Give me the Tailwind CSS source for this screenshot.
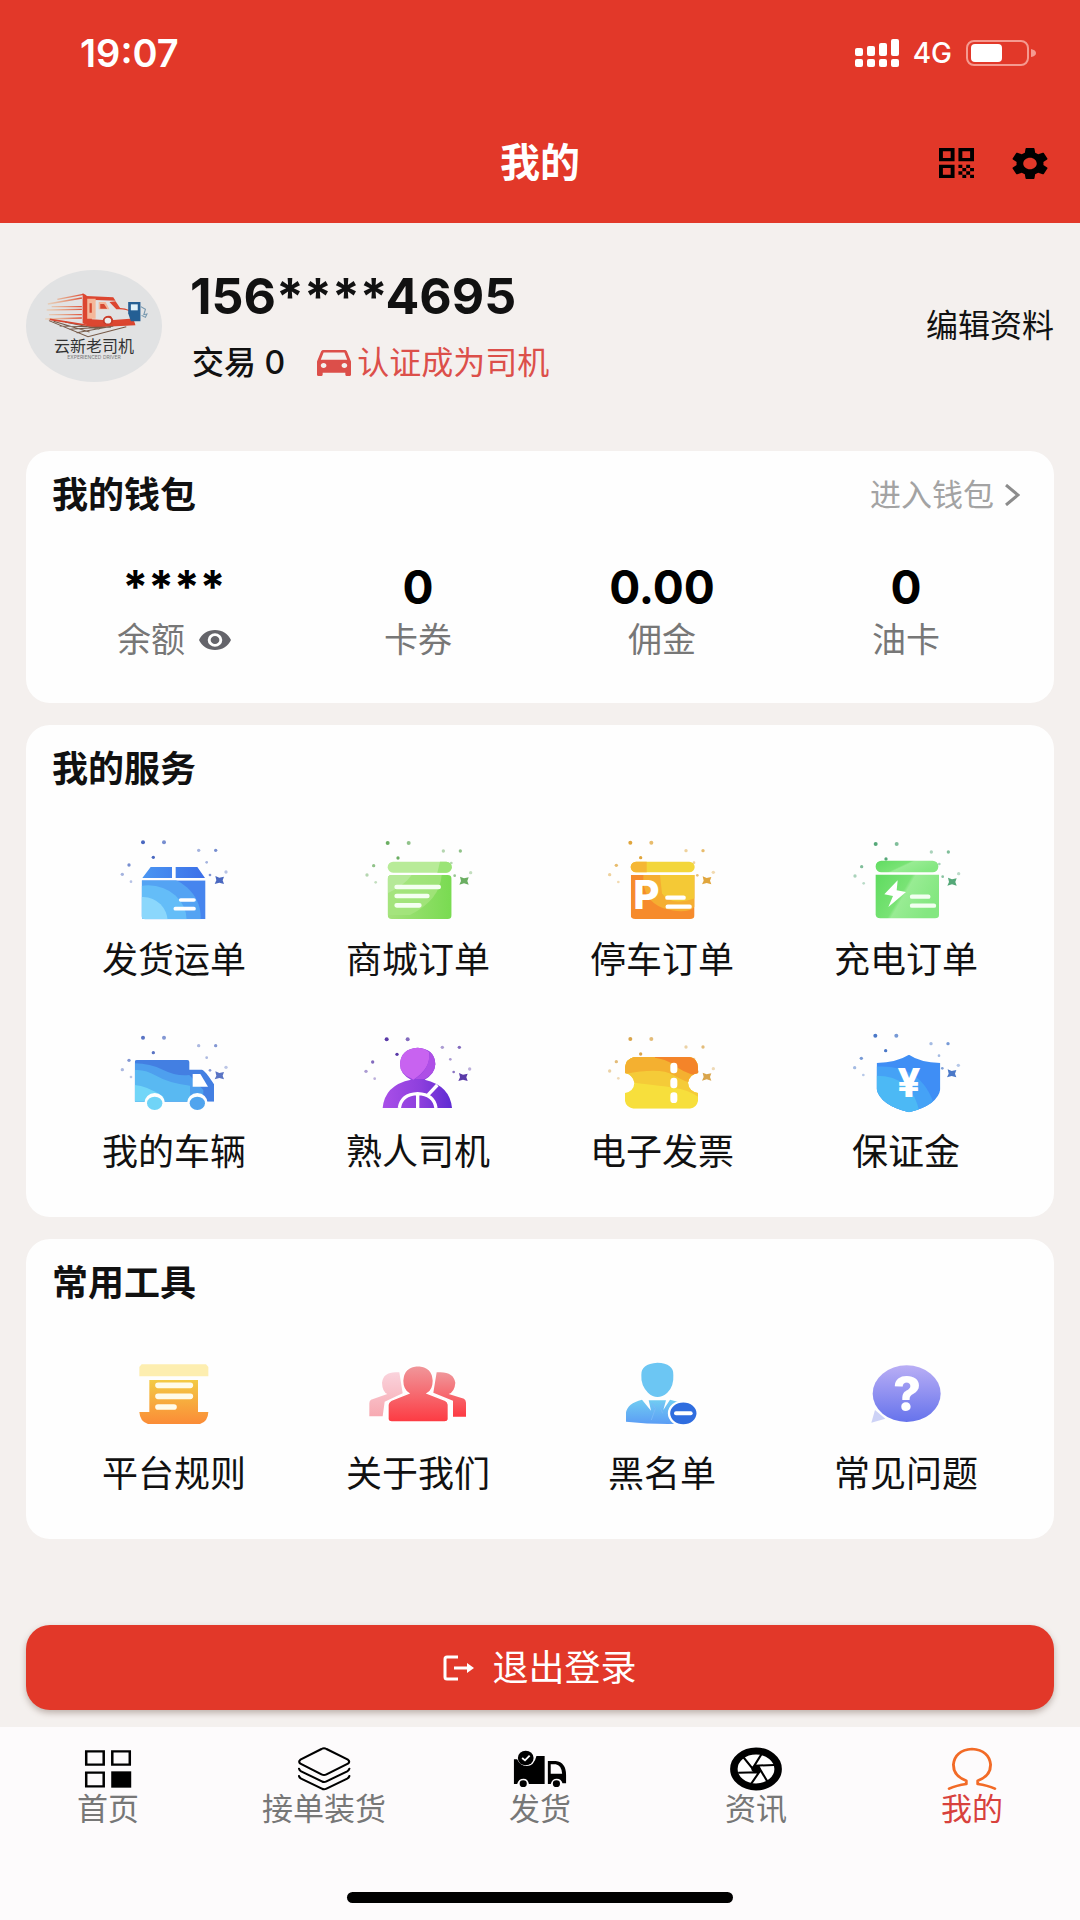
<!DOCTYPE html>
<html lang="zh-CN">
<head>
<meta charset="utf-8">
<meta name="viewport" content="width=device-width, initial-scale=1">
<title>我的</title>
<script src="https://cdn.jsdelivr.net/npm/@tailwindcss/browser@4"></script>
</head>
<body class="flex min-h-screen flex-col bg-[#f4f0ee] font-['Inter','Noto_Sans_CJK_SC',sans-serif] text-[#111]">
<svg class="hidden" aria-hidden="true">
  <symbol id="spark" viewBox="72 39 360 270">
    <g fill="currentColor">
      <circle cx="159" cy="67" r="6"/><circle cx="222" cy="67" r="6" opacity=".75"/><circle cx="190" cy="112" r="5"/>
      <circle cx="326" cy="91" r="5" opacity=".5"/><circle cx="377" cy="91" r="5" opacity=".75"/>
      <circle cx="117" cy="135" r="5" opacity=".75"/><circle cx="350" cy="127" r="4" opacity=".5"/>
      <circle cx="97" cy="163" r="5" opacity=".5"/><circle cx="123" cy="185" r="4" opacity=".4"/>
      <circle cx="360" cy="165" r="4" opacity=".7"/><circle cx="408" cy="156" r="5" opacity=".4"/>
      <path d="M376 168 388 173 402 170 398 181 402 192 388 188 374 192 379 181Z"/>
    </g>
  </symbol>
</svg>

<header class="bg-[#e23829] pb-[3px] text-white">
  <div class="flex h-[106px] items-center justify-between pl-20 pr-11">
    <span class="text-[38px] font-semibold leading-none">19:07</span>
    <div class="flex items-center gap-[14px]">
      <svg class="h-7 w-11" viewBox="0 0 44 28" fill="#fff" aria-label="信号"><rect y="9" width="8" height="8" rx="2"/><rect x="12" y="7" width="8" height="10" rx="2"/><rect x="24" y="4" width="8" height="13" rx="2"/><rect x="36" y="0" width="8" height="17" rx="2"/><rect y="20" width="8" height="8" rx="2"/><rect x="12" y="20" width="8" height="8" rx="2"/><rect x="24" y="20" width="8" height="8" rx="2"/><rect x="36" y="20" width="8" height="8" rx="2"/></svg>
      <span class="text-[28px] font-medium leading-none">4G</span>
      <svg class="h-[26px] w-[70px]" viewBox="0 0 70 26" aria-label="电量"><rect x="1" y="1" width="61" height="24" rx="7" fill="none" stroke="#f59a90" stroke-width="2"/><rect x="5" y="4" width="31" height="18" rx="4" fill="#fff"/><path d="M65 9q5 1 5 4t-5 4Z" fill="#f59a90"/></svg>
    </div>
  </div>
  <div class="grid h-[114px] grid-cols-3 items-center pr-8">
    <h1 class="col-start-2 pl-8 text-center text-[40px] font-bold leading-none">我的</h1>
    <div class="flex justify-end gap-[38px]">
      <button type="button" aria-label="二维码"><svg class="h-[30px] w-[35px]" viewBox="3 3 18 18" preserveAspectRatio="none" fill="#000"><path d="M3 11h8V3H3v8zm2-6h4v4H5V5zM3 21h8v-8H3v8zm2-6h4v4H5v-4zM13 3v8h8V3h-8zm6 6h-4V5h4v4zM19 19h2v2h-2zM13 13h2v2h-2zM15 15h2v2h-2zM13 17h2v2h-2zM15 19h2v2h-2zM17 17h2v2h-2zM17 13h2v2h-2zM19 15h2v2h-2z"/></svg></button>
      <button type="button" aria-label="设置"><svg class="h-[31px] w-[36px]" viewBox="2.4 2.4 19.2 19.2" preserveAspectRatio="none" fill="#000"><path d="M19.14 12.94c.04-.3.06-.61.06-.94 0-.32-.02-.64-.07-.94l2.03-1.58c.18-.14.23-.41.12-.61l-1.92-3.32c-.12-.22-.37-.29-.59-.22l-2.39.96c-.5-.38-1.03-.7-1.62-.94l-.36-2.54c-.04-.24-.24-.41-.48-.41h-3.84c-.24 0-.43.17-.47.41l-.36 2.54c-.59.24-1.13.57-1.62.94l-2.39-.96c-.22-.08-.47 0-.59.22L2.74 8.87c-.12.21-.08.47.12.61l2.03 1.58c-.05.3-.09.63-.09.94s.02.64.07.94l-2.03 1.58c-.18.14-.23.41-.12.61l1.92 3.32c.12.22.37.29.59.22l2.39-.96c.5.38 1.03.7 1.62.94l.36 2.54c.05.24.24.41.48.41h3.84c.24 0 .44-.17.47-.41l.36-2.54c.59-.24 1.13-.56 1.62-.94l2.39.96c.22.08.47 0 .59-.22l1.92-3.32c.12-.22.07-.47-.12-.61l-2.01-1.58zM12 15.6c-1.98 0-3.6-1.62-3.6-3.6s1.62-3.6 3.6-3.6 3.6 1.62 3.6 3.6-1.62 3.6-3.6 3.6z"/></svg></button>
    </div>
  </div>
</header>

<main class="flex flex-1 flex-col px-[26px]">
  <section class="flex items-center pt-[43px]">
    <svg class="h-28 w-[136px] shrink-0" viewBox="0 0 136 112" role="img" aria-label="云新老司机">
      <defs><linearGradient id="tr"><stop stop-color="#f0b070" stop-opacity=".3"/><stop offset="1" stop-color="#dd4a34"/></linearGradient></defs>
      <ellipse cx="68" cy="56" rx="68" ry="56" fill="#e1e2e3"/>
      <g transform="scale(.3827 .3333) translate(-68 -90)">
        <path d="M150 178 218 163M125 192 214 174M135 200H214M122 210 214 208M128 224H214M118 237 214 234" fill="none" stroke="url(#tr)" stroke-width="4"/>
        <path d="M216 160 226 166V254L216 250ZM226 168 296 172 302 182 250 180 240 190V238L270 240Q274 224 290 228L296 240 340 236V216Q330 206 304 208L286 186 302 184 314 204Q342 206 344 220L354 256 250 262 226 254Z" fill="#dc4630"/>
        <path d="M228 176H250V236H228ZM258 186H276L286 208H258Z" fill="#f4b89b"/><path d="M234 190h6v28h-6zM262 192h10l8 14h-18z" fill="#d64a32"/>
        <circle cx="282" cy="242" r="11" fill="#eee" stroke="#c63c2a" stroke-width="5"/>
        <path d="M128 242 230 290 330 260M140 244 234 276M170 246 260 268M156 258 290 262M180 268 270 262M200 278 296 258" fill="none" stroke="#765a48" stroke-width="3"/>
        <path d="M130 238 240 258 352 252" fill="none" stroke="#d8452f" stroke-width="5"/>
        <path d="M335 186H367V244H342L335 220Z" fill="#245f94"/><path d="M342 193h18v18h-18z" fill="#dff1fa"/><path d="M368 200 380 208 376 224 384 222 380 232 370 226" fill="none" stroke="#7697ae" stroke-width="3"/>
      </g>
      <text x="68" y="82" text-anchor="middle" font-size="16" fill="#333">云新老司机</text>
      <text x="68" y="89" text-anchor="middle" font-size="5" fill="#777">EXPERIENCED DRIVER</text>
    </svg>
    <div class="ml-7 flex flex-1 flex-col gap-[15px]">
      <p class="text-[50px] font-bold leading-[60px]">156****4695</p>
      <div class="flex h-11 items-center text-[32px] leading-[44px]">
        <span class="pl-[2px] font-medium">交易 0</span>
        <a href="#" class="ml-8 flex items-center gap-[6px] text-[#dc4f4a]">
          <svg class="h-[26px] w-[34px]" viewBox="3 5 18 16" preserveAspectRatio="none" fill="currentColor"><path d="M18.92 6.01C18.72 5.42 18.16 5 17.5 5h-11c-.66 0-1.21.42-1.42 1.01L3 12v8c0 .55.45 1 1 1h1c.55 0 1-.45 1-1v-1h12v1c0 .55.45 1 1 1h1c.55 0 1-.45 1-1v-8l-2.08-5.99zM6.5 16c-.83 0-1.5-.67-1.5-1.5S5.67 13 6.5 13s1.5.67 1.5 1.5S7.33 16 6.5 16zm11 0c-.83 0-1.5-.67-1.5-1.5s.67-1.5 1.5-1.5 1.5.67 1.5 1.5-.67 1.5-1.5 1.5zM5 11l1.5-4.5h11L19 11H5z"/></svg>
          认证成为司机</a>
      </div>
    </div>
    <a href="#" class="text-[32px] leading-[44px]">编辑资料</a>
  </section>

  <section class="mt-[66px] rounded-3xl bg-[#fefefe] px-[26px] pb-10 pt-[22px]">
    <div class="flex items-center justify-between pr-2">
      <h2 class="text-[36px] font-bold leading-[44px]">我的钱包</h2>
      <a href="#" class="flex items-center gap-[10px] text-[31px] leading-[44px] text-[#a3a3a3]">进入钱包
        <svg class="h-[22px] w-4" viewBox="0 0 16 22" fill="none" stroke="#8c8c8c" stroke-width="3"><path d="M2 1 14 11 2 21"/></svg></a>
    </div>
    <div class="mt-11 grid grid-cols-4 text-center text-[34px] leading-[46px] text-[#777]">
      <div><p class="text-[46px] font-bold leading-[52px] text-black">****</p>
        <p class="mt-1 flex items-center justify-center gap-[14px]">余额<button type="button" aria-label="显示余额"><svg class="h-[20px] w-[32px]" viewBox="1 4.5 22 15" preserveAspectRatio="none" fill="#64646a"><path d="M12 4.5C7 4.5 2.73 7.61 1 12c1.73 4.39 6 7.5 11 7.5s9.27-3.11 11-7.5c-1.73-4.39-6-7.5-11-7.5zM12 17a5 5 0 110-10 5 5 0 010 10zm0-8a3 3 0 100 6 3 3 0 000-6z"/></svg></button></p></div>
      <div><p class="text-[46px] font-bold leading-[52px] text-black">0</p><p class="mt-1">卡券</p></div>
      <div><p class="text-[46px] font-bold leading-[52px] text-black">0.00</p><p class="mt-1">佣金</p></div>
      <div><p class="text-[46px] font-bold leading-[52px] text-black">0</p><p class="mt-1">油卡</p></div>
    </div>
  </section>

  <section class="mt-[22px] rounded-3xl bg-[#fefefe] px-[26px] pb-10 pt-[22px]">
    <h2 class="text-[36px] font-bold leading-[44px]">我的服务</h2>
    <div class="mt-[42px] grid grid-cols-4 gap-y-10 text-[36px] leading-[50px]">
      <a href="#" class="flex flex-col items-center gap-3">
        <svg class="h-[90px] w-[120px]" viewBox="72 39 360 270">
          <defs><linearGradient id="b1"><stop stop-color="#4a96f2"/><stop offset="1" stop-color="#3c6fe8"/></linearGradient><clipPath id="c1"><path d="M155 181H347V298H166Q155 298 155 288Z"/></clipPath></defs>
          <use href="#spark" x="72" y="39" width="360" height="270" color="#4a68c0"/>
          <path d="M182 141H246V174H157ZM257 141H322L345 174H257Z" fill="url(#b1)"/>
          <g clip-path="url(#c1)"><path d="M155 181h192v117H155z" fill="#4685ee"/><ellipse cx="190" cy="290" rx="142" ry="125" fill="#54a3f3"/><ellipse cx="175" cy="300" rx="115" ry="104" fill="#64bdf8"/><ellipse cx="160" cy="305" rx="73" ry="74" fill="#8bd7fc"/></g>
          <path d="M272 240H312M256 266H312" stroke="#fff" stroke-width="11" stroke-linecap="round"/>
        </svg><span>发货运单</span></a>
      <a href="#" class="flex flex-col items-center gap-3">
        <svg class="h-[90px] w-[120px]" viewBox="804 39 360 270">
          <defs><linearGradient id="b2"><stop stop-color="#a4e17b"/><stop offset="1" stop-color="#79db51"/></linearGradient><clipPath id="c2"><rect x="893" y="165" width="192" height="132" rx="12"/></clipPath></defs>
          <use href="#spark" x="806" y="41" width="360" height="270" color="#6bae62"/>
          <rect x="893" y="125" width="192" height="33" rx="16" fill="#b8eb98"/><path d="M1050 125h19a16 16 0 010 33h-27Z" fill="#9be476"/>
          <g clip-path="url(#c2)"><path d="M893 165h192v132H893z" fill="url(#b2)"/><path d="M893 165H1055Q1050 240 960 285H893Z" fill="#a5e57e" opacity=".8"/><path d="M893 165H965Q945 195 893 220Z" fill="#c2ecaa" opacity=".6"/></g>
          <path d="M920 201H1046M920 228H1012M920 256H988" stroke="#f4fff0" stroke-width="14" stroke-linecap="round"/>
        </svg><span>商城订单</span></a>
      <a href="#" class="flex flex-col items-center gap-3">
        <svg class="h-[90px] w-[120px]" viewBox="96 39 360 270">
          <defs><clipPath id="c3"><path d="M182 165H374V285Q374 297 360 297H196Q182 297 182 285Z"/></clipPath></defs>
          <use href="#spark" x="94" y="40" width="360" height="270" color="#e0a53c"/>
          <rect x="182" y="125" width="192" height="32" rx="16" fill="#f3d63a"/><path d="M230 125H198a16 16 0 000 32h32Z" fill="#f5b734"/>
          <g clip-path="url(#c3)"><path d="M182 165h192v132H182z" fill="#f68b2c"/><path d="M220 165H374V260Q350 285 280 265Q215 240 220 165Z" fill="#f5ae31"/><path d="M270 165H374V235Q300 260 276 220Z" fill="#f4c936"/></g>
          <text x="190" y="267" font-size="121" font-weight="800" fill="#fff">P</text>
          <path d="M292 233H341M293 260H359" stroke="#fff" stroke-width="13" stroke-linecap="round"/>
        </svg><span>停车订单</span></a>
      <a href="#" class="flex flex-col items-center gap-3">
        <svg class="h-[90px] w-[120px]" viewBox="828 39 360 270">
          <defs><linearGradient id="b4" y2=".4"><stop stop-color="#5fdb60"/><stop offset=".5" stop-color="#79e375"/><stop offset=".55" stop-color="#98ec93"/><stop offset="1" stop-color="#84e781"/></linearGradient></defs>
          <use href="#spark" x="830" y="44" width="360" height="270" color="#55a878"/>
          <rect x="917" y="122" width="188" height="35" rx="17" fill="url(#b4)"/><path d="M917 164H1107V285Q1107 295 1095 295H931Q917 295 917 283Z" fill="url(#b4)"/>
          <path d="M983 181 943 223 969 228 955 261 1008 216 980 211Z" fill="#fff"/>
          <path d="M1026 230H1075M1026 257H1092" stroke="#f2fff1" stroke-width="13" stroke-linecap="round"/>
        </svg><span>充电订单</span></a>
      <a href="#" class="flex flex-col items-center gap-3">
        <svg class="h-[90px] w-[120px]" viewBox="72 30 360 270">
          <defs><clipPath id="c5"><path d="M140 135H292Q298 135 298 141V164H335Q345 165 372 208V260H134V141Q134 135 140 135Z"/></clipPath></defs>
          <use href="#spark" x="72" y="40" width="360" height="270" color="#5a74c4"/>
          <g clip-path="url(#c5)"><path d="M134 130H372V262H134Z" fill="#437fe2"/><path d="M134 145Q180 145 220 165T298 180L340 225V262H134Z" fill="#4e9fee"/><path d="M134 165Q165 162 200 183T300 212V262H134Z" fill="#59b9f2"/><path d="M134 210Q170 212 220 245V262H134Z" fill="#71d6f8"/></g>
          <path d="M308 177H331L354 215H308Z" fill="#fff"/>
          <circle cx="194" cy="265" r="31" fill="#fefefe"/><circle cx="322" cy="265" r="31" fill="#fefefe"/><ellipse cx="194" cy="265" rx="23" ry="20" fill="#70d4f7"/><ellipse cx="322" cy="265" rx="23" ry="20" fill="#50a4ee"/>
        </svg><span>我的车辆</span></a>
      <a href="#" class="flex flex-col items-center gap-3">
        <svg class="h-[90px] w-[120px]" viewBox="804 30 360 270">
          <defs><linearGradient id="b6"><stop stop-color="#a94fe8"/><stop offset=".55" stop-color="#8d3fdd"/><stop offset="1" stop-color="#5e2bd2"/></linearGradient></defs>
          <use href="#spark" x="803" y="45" width="360" height="270" color="#5a3aa8"/>
          <path d="M878 279Q884 210 963 194Q930 178 930 148Q932 101 983 98Q1034 101 1036 148Q1034 178 1004 194Q1080 212 1086 279Z" fill="url(#b6)"/>
          <path d="M963 190Q930 176 930 148Q932 101 983 98Q1005 99 1018 112Q1024 160 970 194Z" fill="#c863f0"/><path d="M1018 108Q1036 124 1036 148Q1034 178 1004 192H975Q1022 160 1018 108Z" fill="#ae4fe6"/>
          <path d="M928 279Q934 238 983 236Q1032 238 1038 279M983 240V279M1012 242 1042 210" fill="none" stroke="#fff" stroke-width="10"/>
        </svg><span>熟人司机</span></a>
      <a href="#" class="flex flex-col items-center gap-3">
        <svg class="h-[90px] w-[120px]" viewBox="96 30 360 270">
          <defs><clipPath id="c7"><path d="M192 126H358Q382 130 384 156V174Q356 180 354 203Q356 228 384 234V258Q380 278 360 281H190Q168 276 165 258V234Q192 228 193 203Q190 180 165 174V156Q168 132 192 126Z"/></clipPath></defs>
          <use href="#spark" x="94" y="44" width="360" height="270" color="#d9a54c"/>
          <g clip-path="url(#c7)"><path d="M160 120h230v170H160z" fill="#f7df3c"/><path d="M160 120H390V250Q360 225 310 218T160 200Z" fill="#f5cb38"/><path d="M160 120H390V210Q350 205 310 180T160 178Z" fill="#f4b030"/><path d="M255 120H390V185Q340 175 310 148Q285 132 255 128Z" fill="#f48429"/></g>
          <g fill="#fff"><rect x="301" y="143" width="21" height="32" rx="10"/><rect x="301" y="188" width="21" height="32" rx="10"/><rect x="301" y="232" width="21" height="32" rx="10"/></g>
        </svg><span>电子发票</span></a>
      <a href="#" class="flex flex-col items-center gap-3">
        <svg class="h-[90px] w-[120px]" viewBox="828 30 360 270">
          <defs><clipPath id="c8"><path d="M1017 119Q1050 142 1111 144V222Q1104 270 1017 292Q930 270 920 222V144Q980 142 1017 119Z"/></clipPath></defs>
          <use href="#spark" x="829" y="34" width="360" height="270" color="#4a78c8"/>
          <g clip-path="url(#c8)"><path d="M915 110h200v190H915z" fill="#3f8ef5"/><path d="M915 155Q1070 145 1100 300H915Z" fill="#45a2f6"/><path d="M915 182Q1030 180 1050 300H915Z" fill="#4cb9f5"/></g>
          <text x="1017" y="247" text-anchor="middle" font-size="121" font-weight="800" fill="#fff">¥</text>
        </svg><span>保证金</span></a>
    </div>
  </section>

  <section class="mt-[22px] rounded-3xl bg-[#fefefe] px-[26px] pb-10 pt-[22px]">
    <h2 class="text-[36px] font-bold leading-[44px]">常用工具</h2>
    <div class="mt-[42px] grid grid-cols-4 text-[36px] leading-[50px]">
      <a href="#" class="flex flex-col items-center gap-3">
        <svg class="h-[90px] w-[120px]" viewBox="72 21 360 270">
          <defs><linearGradient id="g1" x2="0" y2="1"><stop stop-color="#f3ca45"/><stop offset="1" stop-color="#fb8c37"/></linearGradient></defs>
          <path d="M155 73H348L355 81V109H148V81Z" fill="#fdeeb0"/>
          <path d="M178 120H324V216H355Q354 245 330 252H174Q150 245 148 216H178Z" fill="url(#g1)"/>
          <path d="M204 136H301M204 169H301M204 201H252" stroke="#fffbe9" stroke-width="17" stroke-linecap="round"/>
        </svg><span>平台规则</span></a>
      <a href="#" class="flex flex-col items-center gap-3">
        <svg class="h-[90px] w-[120px]" viewBox="804 21 360 270">
          <defs><linearGradient id="g2" x2="0" y2="1"><stop stop-color="#f0979b"/><stop offset=".5" stop-color="#f66a70"/><stop offset="1" stop-color="#fd3a42"/></linearGradient><linearGradient id="g2b" x2="0" y2="1"><stop stop-color="#fad3dc"/><stop offset="1" stop-color="#f7a9b1"/></linearGradient></defs>
          <path d="M928 97Q880 92 876 128Q877 155 892 162L843 179Q838 183 838 190V229H878L884 185L938 160Z" fill="url(#g2b)"/>
          <path d="M1040 97Q1090 92 1096 128Q1094 155 1076 162L1122 176Q1128 180 1128 188V230H1089V182L1030 158Z" fill="url(#g2)"/>
          <path d="M984 77Q1028 80 1030 122Q1030 150 1012 160L1066 181Q1074 185 1075 194V238Q1074 245 1064 246H905Q895 245 894 238V194Q895 186 903 181L956 160Q938 148 938 122Q940 80 984 77Z" fill="url(#g2)" stroke="#fff" stroke-width="4"/>
        </svg><span>关于我们</span></a>
      <a href="#" class="flex flex-col items-center gap-3">
        <svg class="h-[90px] w-[120px]" viewBox="96 21 360 270">
          <defs><linearGradient id="g3" x2="0" y2="1"><stop stop-color="#71cdf2"/><stop offset="1" stop-color="#5b9df5"/></linearGradient></defs>
          <path d="M262 68Q312 70 310 105Q312 140 292 158Q262 184 234 158Q212 136 214 105Q212 72 262 68Z" fill="#6cc6f3"/>
          <path d="M216 179 243 212 236 181H288L280 210 300 179 340 190Q365 210 362 250Q265 256 168 245V218Q172 190 216 179Z" fill="url(#g3)"/>
          <path d="M246 190 256 206 244 240M280 190 272 206 278 220" fill="none" stroke="#78b9f7" stroke-width="3"/>
          <ellipse cx="340" cy="220" rx="43" ry="36" fill="#2f6ddf" stroke="#fff" stroke-width="7"/><path d="M318 220H362" stroke="#fff" stroke-width="12" stroke-linecap="round"/>
        </svg><span>黑名单</span></a>
      <a href="#" class="flex flex-col items-center gap-3">
        <svg class="h-[90px] w-[120px]" viewBox="828 21 360 270">
          <defs><linearGradient id="g4" x2="0" y2="1"><stop stop-color="#b9aef5"/><stop offset="1" stop-color="#6673ec"/></linearGradient></defs>
          <path d="M915 210 904 248 946 236Z" fill="#cdd2f6"/>
          <ellipse cx="1010" cy="161" rx="102" ry="85" fill="url(#g4)"/>
          <text x="1011" y="214" text-anchor="middle" font-size="146" font-weight="800" fill="#fff">?</text>
        </svg><span>常见问题</span></a>
    </div>
  </section>

  <button type="button" class="mt-[86px] flex h-[85px] items-center justify-center gap-[18px] rounded-3xl bg-[#e23829] text-[36px] leading-none text-white shadow-[0_3px_6px_rgba(90,60,50,0.35)]">
    <svg class="h-[26px] w-[31px]" viewBox="0 0 31 26" fill="none" stroke="#fff" stroke-width="3"><path d="M15 2H4Q2 2 2 4V22Q2 24 4 24H15M11 13H26"/><path d="M24 8 31 13 24 18Z" fill="#fff" stroke="none"/></svg>
    退出登录</button>
</main>

<nav class="mt-[17px] bg-[#fdfbfc] pb-[17px] pt-[18px]">
  <div class="grid grid-cols-5 text-[31px] leading-[32px] text-[#777]">
    <a href="#" class="flex flex-col items-center"><svg class="h-12 w-[60px]" viewBox="218 435 168 144" preserveAspectRatio="none"><path d="M241 454H290V494H241ZM314 454H363V494H314ZM241 518H290V559H241Z" fill="none" stroke="#000" stroke-width="7"/><path d="M311 514H367V563H311Z"/></svg>首页</a>
    <a href="#" class="flex flex-col items-center"><svg class="h-12 w-[60px]" viewBox="823 435 168 144" preserveAspectRatio="none" fill="none" stroke="#000" stroke-width="6" stroke-linecap="round" stroke-linejoin="round"><path d="M900 447Q907 443 914 447L974 479Q981 485 974 491L914 523Q907 527 900 523L841 491Q834 485 841 479ZM837 506Q838 511 843 514L901 544Q907 548 914 544L972 514Q977 511 978 506M837 528Q838 533 843 536L901 566Q907 570 914 566L972 536Q977 533 978 528"/></svg>接单装货</a>
    <a href="#" class="flex flex-col items-center"><svg class="h-12 w-[60px]" viewBox="-28 435 168 144" preserveAspectRatio="none"><path d="M-17 478H-8Q0 498 18 498Q40 498 46 468H69V552H25Q22 536 10 536Q-4 536 -8 552H-17Z"/><circle cx="16" cy="474" r="22"/><path d="M6 474 14 481 27 467" fill="none" stroke="#fff" stroke-width="5"/><path fill-rule="evenodd" d="M78 483H100Q129 487 129 525V550H119Q116 536 103 536Q90 536 86 552H78ZM86 493V521H118Q116 496 100 493Z"/><circle cx="9" cy="551" r="10"/><circle cx="102" cy="551" r="10"/></svg>发货</a>
    <a href="#" class="flex flex-col items-center"><svg class="h-12 w-[60px]" viewBox="577 435 168 144" preserveAspectRatio="none"><circle cx="661" cy="507" r="62" fill="#fff" stroke="#000" stroke-width="0"/><ellipse cx="661" cy="507" rx="62" ry="54" fill="none" stroke="#000" stroke-width="21"/><path d="M678 460 650 508M712 495 657 497M697 552 668 500M647 552 674 510M611 518 668 517M626 472 656 512" stroke="#000" stroke-width="6"/><ellipse cx="661" cy="507" rx="13" ry="11"/></svg>资讯</a>
    <a href="#" class="flex flex-col items-center text-[#d8413c]" aria-current="page"><svg class="h-12 w-[60px]" viewBox="1182 435 168 144" preserveAspectRatio="none" fill="none" stroke="#f26a26" stroke-width="8" stroke-linecap="round" stroke-linejoin="round"><path d="M1202 566Q1222 556 1250 552V542Q1214 528 1214 494Q1218 451 1266 447Q1314 451 1318 494Q1318 528 1282 542V552Q1310 556 1330 566"/></svg>我的</a>
  </div>
  <div class="mx-auto mt-[67px] h-[11px] w-[386px] rounded-full bg-black"></div>
</nav>
</body>
</html>
